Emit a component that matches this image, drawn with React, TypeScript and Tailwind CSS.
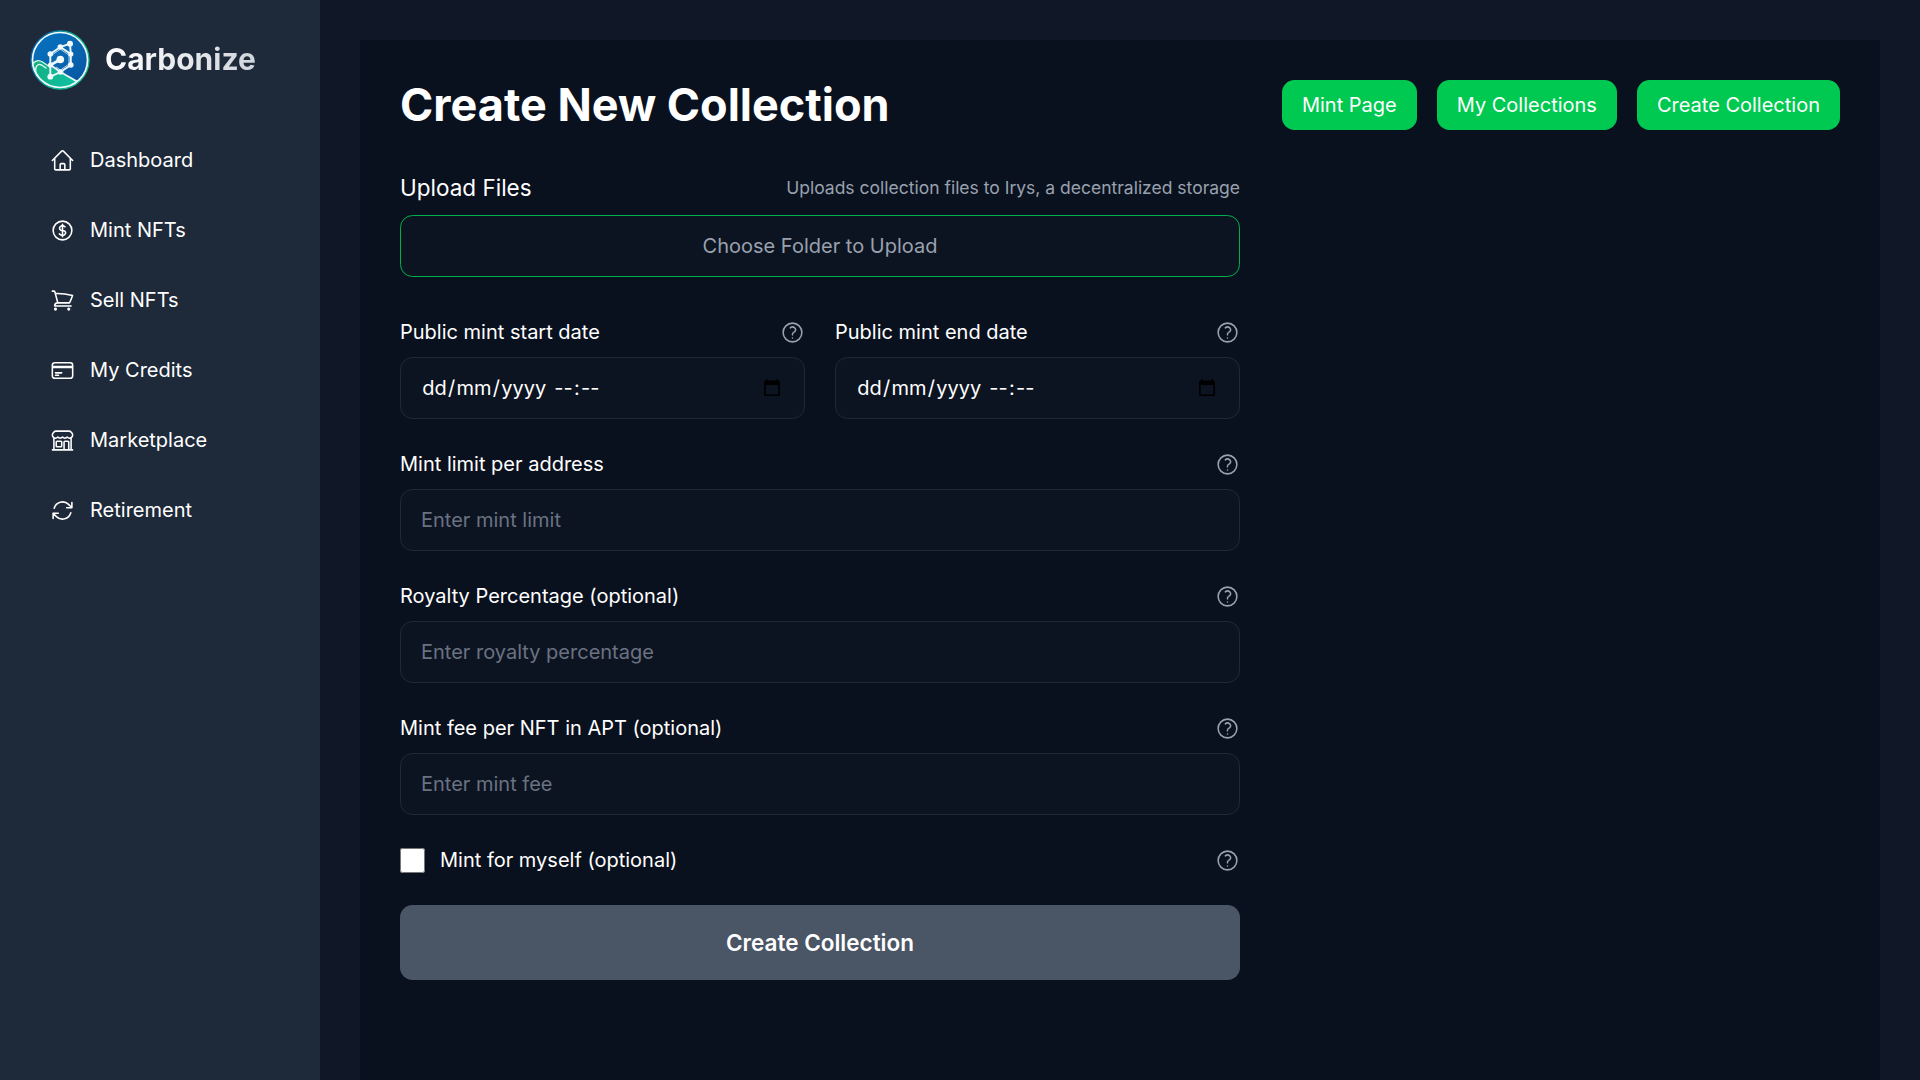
import type { ReactNode } from 'react';
import type { IconType } from 'react-icons';
import {
  HiOutlineArrowPath,
  HiOutlineBuildingStorefront,
  HiOutlineCreditCard,
  HiOutlineCurrencyDollar,
  HiOutlineHome,
  HiOutlineQuestionMarkCircle,
  HiOutlineShoppingCart,
} from 'react-icons/hi2';

const navItems: { label: string; icon: IconType }[] = [
  { label: 'Dashboard', icon: HiOutlineHome },
  { label: 'Mint NFTs', icon: HiOutlineCurrencyDollar },
  { label: 'Sell NFTs', icon: HiOutlineShoppingCart },
  { label: 'My Credits', icon: HiOutlineCreditCard },
  { label: 'Marketplace', icon: HiOutlineBuildingStorefront },
  { label: 'Retirement', icon: HiOutlineArrowPath },
];

function Logo() {
  const nodes: [number, number, number][] = [
    [40, 13.7, 3],
    [30.3, 17, 2.8],
    [20.3, 24, 2.8],
    [40.8, 24, 2.6],
    [40.8, 35, 2.8],
    [20.5, 35, 2.6],
    [30.5, 42, 2.8],
    [20.3, 46.7, 2.9],
    [30.3, 29.5, 3.8],
  ];
  return (
    <svg className="size-[60px] shrink-0" viewBox="0 0 60 60" fill="none">
      <defs>
        <linearGradient id="ring" x1="8" y1="10" x2="42" y2="24" gradientUnits="userSpaceOnUse">
          <stop offset="0" stopColor="#0b66ac" />
          <stop offset="1" stopColor="#10b88f" />
        </linearGradient>
        <linearGradient id="sky" x1="12" y1="8" x2="46" y2="48" gradientUnits="userSpaceOnUse">
          <stop offset="0" stopColor="#066fbd" />
          <stop offset="0.55" stopColor="#0a66b0" />
          <stop offset="1" stopColor="#0759a6" />
        </linearGradient>
        <linearGradient id="hill" x1="6" y1="34" x2="40" y2="56" gradientUnits="userSpaceOnUse">
          <stop offset="0" stopColor="#12b183" />
          <stop offset="1" stopColor="#0fbfa0" />
        </linearGradient>
        <clipPath id="disc">
          <circle cx="30" cy="30" r="27.5" />
        </clipPath>
      </defs>
      <circle cx="30" cy="30" r="29.7" fill="url(#ring)" />
      <circle cx="30" cy="30" r="27.5" fill="url(#sky)" />
      <g clipPath="url(#disc)">
        <path d="M0 34C4 30 9 29 13 32L30 42.500L49 51.500L42 60H0Z" fill="url(#hill)" />
        <path d="M3 33.500C6 30 9.500 30 12.500 32L20 37" stroke="#d9f2ec" strokeWidth="1.300" />
        <path d="M8 46C5.500 43 5.500 39 6 37.500C7 34 9.500 34 11.500 35L16 38" stroke="#e9f7f6" strokeWidth="1.400" strokeLinecap="round" />
        <path d="M30.500 42L47 51.500" stroke="#e9f7f6" strokeWidth="2" />
      </g>
      <circle cx="30" cy="30" r="27.5" stroke="#eefafa" strokeWidth="1.700" />
      <path
        d="M40 13.700L30.300 17L20.300 24V46.700L30.500 42L40.800 35V24L30.300 17M40 13.700L40.800 24M20.500 35L30.500 42"
        stroke="#f0fafc"
        strokeWidth="1.900"
      />
      <path d="M30.300 29.500L20.500 35" stroke="#f0fafc" strokeWidth="2.600" />
      <path d="M22 25L30.300 19.200L39 25V34L30.500 40L26 37" stroke="#f0fafc" strokeWidth="1" opacity="0.75" />
      {nodes.map(([cx, cy, r]) => (
        <circle key={`${cx}-${cy}`} cx={cx} cy={cy} r={r} fill="#f0fafc" />
      ))}
    </svg>
  );
}

function Sidebar() {
  return (
    <aside className="flex w-[320px] shrink-0 flex-col bg-gray-800">
      <div className="flex items-center gap-[15px] p-[30px]">
        <Logo />
        <span className="mb-0.5 bg-gradient-to-r from-white to-gray-300 bg-clip-text text-[30px] leading-[40px] font-bold text-transparent">
          Carbonize
        </span>
      </div>
      <nav className="flex flex-col gap-2.5 px-[30px] pt-[10px]">
        {navItems.map(({ label, icon: Icon }) => (
          <a key={label} className="flex h-[60px] items-center gap-[15px] px-5 text-[20px]">
            <Icon className="size-[25px]" />
            {label}
          </a>
        ))}
      </nav>
    </aside>
  );
}

function Field({ label, children }: { label: string; children: ReactNode }) {
  return (
    <div className="flex flex-1 flex-col gap-2.5">
      <div className="flex h-[30px] items-center justify-between">
        <label>{label}</label>
        <HiOutlineQuestionMarkCircle className="size-[25px] text-gray-400" />
      </div>
      {children}
    </div>
  );
}

function TextField({ label, placeholder }: { label: string; placeholder: string }) {
  return (
    <Field label={label}>
      <input
        placeholder={placeholder}
        className="h-[62px] rounded-[12.5px] border border-gray-800 bg-[#0d1421] px-5 placeholder:text-gray-500"
      />
    </Field>
  );
}

function CalendarIcon() {
  return (
    <svg className="size-[20px]" viewBox="0 0 20 20" fill="none">
      <path
        fill="#000"
        fillRule="evenodd"
        d="M4 1H5.500V2.500H14.500V1H16V2.500H16.500A1.500 1.500 0 0 1 18 4V16.500A1.500 1.500 0 0 1 16.500 18H3.500A1.500 1.500 0 0 1 2 16.500V4A1.500 1.500 0 0 1 3.500 2.500H4ZM3.700 7V16.400H16.300V7Z"
      />
    </svg>
  );
}

function DateField({ label }: { label: string }) {
  return (
    <Field label={label}>
      <div className="flex h-[62px] items-center justify-between rounded-[12.5px] border border-gray-800 bg-[#0d1421] pr-[22px] pl-5">
        <span className="whitespace-pre">
          {['dd', '/', 'mm', '/', 'yyyy', ' ', '--', ':', '--'].map((part, i) => (
            <span key={i} className={part.length > 1 ? 'px-[1.25px]' : ''}>
              {part}
            </span>
          ))}
        </span>
        <CalendarIcon />
      </div>
    </Field>
  );
}

export default function App() {
  return (
    <div className="flex h-screen overflow-hidden bg-gray-900 font-['Inter',sans-serif] text-[20px] leading-[30px] text-white">
      <Sidebar />
      <main className="flex-1 px-10 pt-10">
        <div className="h-full bg-[#0a111e] p-10">
          <header className="flex items-center justify-between">
            <h1 className="text-[45px] leading-[50px] font-bold">Create New Collection</h1>
            <div className="flex gap-5">
              {['Mint Page', 'My Collections', 'Create Collection'].map((name) => (
                <button key={name} className="h-[50px] rounded-[12.5px] bg-green-500 px-5">
                  {name}
                </button>
              ))}
            </div>
          </header>
          <form className="mt-10 flex w-[840px] flex-col gap-[30px]">
            <div className="mb-2.5 flex flex-col gap-2.5">
              <div className="flex h-[35px] items-center justify-between">
                <label className="text-[22.5px]">Upload Files</label>
                <span className="text-[17.5px] text-gray-400">
                  Uploads collection files to Irys, a decentralized storage
                </span>
              </div>
              <button
                type="button"
                className="h-[62px] rounded-[12.5px] border border-[#00b04a] bg-[#0d1421] text-gray-400"
              >
                Choose Folder to Upload
              </button>
            </div>
            <div className="flex gap-[30px]">
              <DateField label="Public mint start date" />
              <DateField label="Public mint end date" />
            </div>
            <TextField label="Mint limit per address" placeholder="Enter mint limit" />
            <TextField label="Royalty Percentage (optional)" placeholder="Enter royalty percentage" />
            <TextField label="Mint fee per NFT in APT (optional)" placeholder="Enter mint fee" />
            <div className="flex h-[30px] items-center gap-[15px]">
              <input type="checkbox" className="size-[25px]" />
              <label className="flex-1">Mint for myself (optional)</label>
              <HiOutlineQuestionMarkCircle className="size-[25px] text-gray-400" />
            </div>
            <button type="button" className="h-[75px] rounded-[12.5px] bg-gray-600 text-[22.5px] font-semibold">
              Create Collection
            </button>
          </form>
        </div>
      </main>
    </div>
  );
}
